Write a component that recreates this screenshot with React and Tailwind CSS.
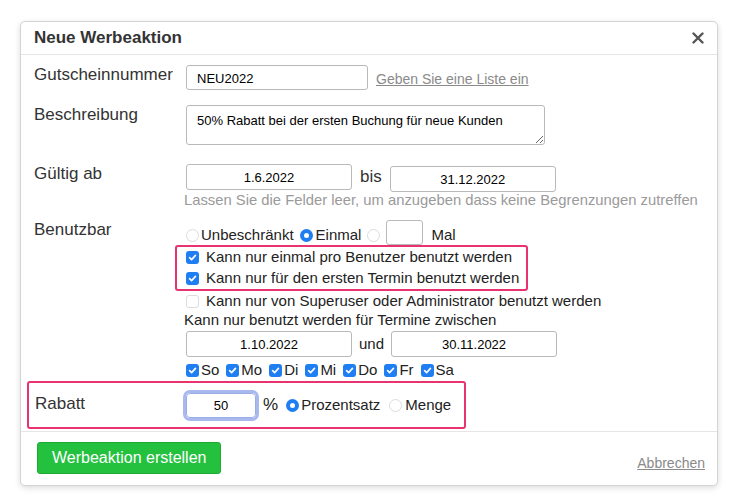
import { useState } from "react";

function Check({ on = true }) {
  return on ? (
    <span className="w-[13px] h-[13px] rounded-[3px] bg-[#1f7ef2] inline-flex items-center justify-center shrink-0">
      <svg width="9" height="9" viewBox="0 0 10 10">
        <path d="M1.8 5.2 L4 7.4 L8.3 2.6" fill="none" stroke="white" strokeWidth="1.8" strokeLinecap="round" strokeLinejoin="round" />
      </svg>
    </span>
  ) : (
    <span className="inline-block w-[13px] h-[13px] rounded-[3px] border border-[#dcdcdc] bg-white shrink-0" />
  );
}

function Radio({ on = false }) {
  return on ? (
    <span className="w-[13px] h-[13px] rounded-full bg-[#1f7ef2] inline-flex items-center justify-center shrink-0">
      <span className="w-[5px] h-[5px] rounded-full bg-white" />
    </span>
  ) : (
    <span className="inline-block w-[13px] h-[13px] rounded-full border border-[#dcdcdc] bg-white shrink-0" />
  );
}

const dateInput =
  "h-[26px] border border-[#b9b9b9] rounded-[3px] text-[13px] text-center text-black bg-white outline-none";

export default function App() {
  const [code, setCode] = useState("NEU2022");
  const days = ["So", "Mo", "Di", "Mi", "Do", "Fr", "Sa"];

  return (
    <div className="min-h-screen bg-white pt-[21px] pl-[20px] text-[#333] font-['Liberation_Sans',Arial,sans-serif]">
      <div className="w-[698px] h-[465px] rounded-[5px] border border-[#d4d4d4] shadow-[0_2px_6px_rgba(0,0,0,0.14)] bg-white flex flex-col overflow-hidden">
        {/* header */}
        <div className="h-[33px] shrink-0 border-b border-[#e6e6e6] flex items-center justify-between pl-[13px] pr-[13px]">
          <span className="text-[17px] font-bold">Neue Werbeaktion</span>
          <svg width="12" height="12" viewBox="0 0 12 12">
            <path d="M1.5 1.5 L10.5 10.5 M10.5 1.5 L1.5 10.5" stroke="#555" strokeWidth="2.4" strokeLinecap="round" />
          </svg>
        </div>

        {/* form body */}
        <div className="flex-1 pl-[13px] pr-[14px] pt-[10px]">
          <div className="flex items-start">
            <div className="w-[152px] text-[17px] leading-[20px]">Gutscheinnummer</div>
            <input
              value={code}
              onChange={(e) => setCode(e.target.value)}
              className="w-[182px] h-[25px] border border-[#b9b9b9] rounded-[3px] text-[13px] px-[10px] pt-[2px] text-black outline-none"
            />
            <a className="ml-[8px] mt-[4px] text-[14px] text-[#8a8a8a] underline">Geben Sie eine Liste ein</a>
          </div>

          <div className="flex items-start mt-[15px]">
            <div className="w-[152px] text-[17px] leading-[20px]">Beschreibung</div>
            <textarea
              defaultValue="50% Rabatt bei der ersten Buchung für neue Kunden"
              className="w-[359px] h-[40px] border border-[#b9b9b9] rounded-[3px] text-[13px] px-[10px] pt-[5px] text-black outline-none resize"
            />
          </div>

          <div className="flex items-start mt-[19px]">
            <div className="w-[152px] text-[17px] leading-[20px]">Gültig ab</div>
            <div className="flex flex-col">
              <div className="flex items-start">
                <input defaultValue="1.6.2022" className={`${dateInput} w-[166px]`} />
                <span className="ml-[8px] mt-[2px] text-[17px] leading-[22px]">bis</span>
                <input defaultValue="31.12.2022" className={`${dateInput} w-[166px] ml-[8px] mt-[2px]`} />
              </div>
              <div className="-mt-[1px] -ml-[2px] whitespace-nowrap text-[14.8px] leading-[18px] text-[#9a9a9a]">
                Lassen Sie die Felder leer, um anzugeben dass keine Begrenzungen zutreffen
              </div>
            </div>
          </div>

          <div className="flex items-start mt-[11px]">
            <div className="w-[152px] text-[17px] leading-[20px]">Benutzbar</div>
            <div className="flex flex-col text-[15px] text-[#222]">
              <div className="flex items-center h-[25px]">
                <span className="mt-[6px] flex items-center">
                  <Radio />
                  <span className="ml-[2px]">Unbeschränkt</span>
                  <span className="ml-[6px] flex"><Radio on /></span>
                  <span className="ml-[3px]">Einmal</span>
                  <span className="ml-[6px] flex"><Radio /></span>
                </span>
                <input className="ml-[6px] w-[37px] h-[25px] border border-[#b9b9b9] rounded-[3px] outline-none" />
                <span className="ml-[8px] mt-[6px]">Mal</span>
              </div>
              <div className="-ml-[11px] w-[353px] h-[46px] border-2 border-[#e8336f] rounded-[3px] pl-[9px] flex flex-col justify-center">
                <div className="flex items-center h-[21px] gap-[7px]">
                  <Check />
                  <span>Kann nur einmal pro Benutzer benutzt werden</span>
                </div>
                <div className="flex items-center h-[21px] gap-[7px]">
                  <Check />
                  <span>Kann nur für den ersten Termin benutzt werden</span>
                </div>
              </div>
              <div className="flex items-center h-[20px] gap-[7px]">
                <Check on={false} />
                <span>Kann nur von Superuser oder Administrator benutzt werden</span>
              </div>
              <div className="-ml-[2px] h-[19px] flex items-center">Kann nur benutzt werden für Termine zwischen</div>
              <div className="flex items-center mt-[1px]">
                <input defaultValue="1.10.2022" className={`${dateInput} w-[166px]`} />
                <span className="ml-[7px] text-[15px]">und</span>
                <input defaultValue="30.11.2022" className={`${dateInput} w-[166px] ml-[7px]`} />
              </div>
              <div className="flex items-center h-[20px] mt-[3px] gap-[7px]">
                {days.map((d) => (
                  <span key={d} className="flex items-center gap-[2px]">
                    <Check />
                    <span>{d}</span>
                  </span>
                ))}
              </div>
            </div>
          </div>

          <div className="-ml-[7px] mt-[1px] w-[439px] h-[48px] border-2 border-[#e8336f] rounded-[3px] pl-[6px] flex items-center">
            <div className="w-[151px] text-[17px] leading-[20px] -mt-[2px]">Rabatt</div>
            <input
              defaultValue="50"
              className="w-[70px] h-[25px] border border-[#9aaee6] rounded-[4px] ring-[3px] ring-[#a9b9ee] text-[13px] text-center text-black outline-none"
            />
            <span className="ml-[7px] text-[17px] text-[#222]">%</span>
            <span className="ml-[8px] flex items-center text-[15px] text-[#222]">
              <Radio on />
              <span className="ml-[2px]">Prozentsatz</span>
              <span className="ml-[9px] flex"><Radio /></span>
              <span className="ml-[3px]">Menge</span>
            </span>
          </div>
        </div>

        {/* footer */}
        <div className="h-[54px] shrink-0 border-t border-[#e6e6e6] flex items-start justify-between pl-[16px] pr-[12px] pt-[10px]">
          <button className="h-[32px] px-[14px] rounded-[3px] bg-[#24c13f] border border-[#1faa36] text-white text-[16px]">
            Werbeaktion erstellen
          </button>
          <a className="text-[14px] text-[#8a8a8a] underline mt-[11px]">Abbrechen</a>
        </div>
      </div>
    </div>
  );
}
